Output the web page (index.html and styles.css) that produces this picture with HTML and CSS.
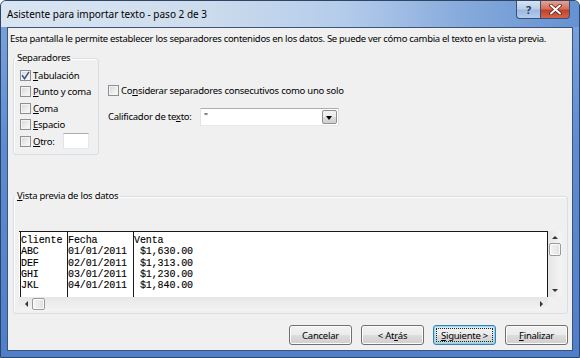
FILE: index.html
```html
<!DOCTYPE html>
<html lang="es">
<head>
    <meta charset="UTF-8">
    <title>Asistente para importar texto - paso 2 de 3</title>
    <link rel="stylesheet" href="styles.css">
</head>
<body>

    <div class="window">
        <!-- Title bar -->
        <div class="titlebar">
            <span class="title">Asistente para importar texto - paso 2 de 3</span>
            <div class="caption-buttons">
                <span class="cap-btn help">?</span>
                <span class="cap-btn close">
                    <svg width="13" height="11" viewBox="0 0 13 11">
                        <path d="M2 1.5 L11 9.5 M11 1.5 L2 9.5" stroke="#5a1a12" stroke-width="3.6" stroke-linecap="round"/>
                        <path d="M2 1.5 L11 9.5 M11 1.5 L2 9.5" stroke="#ffffff" stroke-width="2" stroke-linecap="round"/>
                    </svg>
                </span>
            </div>
        </div>

        <div class="client">
            <p class="intro">Esta pantalla le permite establecer los separadores contenidos en los datos. Se puede ver cómo cambia el texto en la vista previa.</p>

            <div class="options">
                <fieldset class="group separators">
                    <legend>Separadores</legend>
                    <label class="check-row"><span class="check checked"><svg width="9" height="9" viewBox="0 0 9 9"><path d="M1 4.2 L3.6 7.6 L8 0.8" fill="none" stroke="#3f5488" stroke-width="1.5"/></svg></span><u>T</u>abulación</label>
                    <label class="check-row"><span class="check"></span><u>P</u>unto y coma</label>
                    <label class="check-row"><span class="check"></span><u>C</u>oma</label>
                    <label class="check-row"><span class="check"></span><u>E</u>spacio</label>
                    <label class="check-row"><span class="check"></span><u>O</u>tro:<span class="textbox"></span></label>
                </fieldset>

                <div class="side">
                    <label class="check-row"><span class="check"></span>Co<u>n</u>siderar separadores consecutivos como uno solo</label>
                    <div class="qualifier">
                        <span class="qualifier-label">Calificador de te<u>x</u>to:</span>
                        <div class="combo">
                            <span class="combo-value">"</span>
                            <span class="combo-arrow"></span>
                        </div>
                    </div>
                </div>
            </div>

            <fieldset class="group preview-group">
                <legend><u>V</u>ista previa de los datos</legend>
                <div class="preview">
                    <div class="preview-main">
                        <div class="data">
                            <div class="col col-client">Cliente<br>ABC<br>DEF<br>GHI<br>JKL</div>
                            <div class="col col-date">Fecha<br>01/01/2011<br>02/01/2011<br>03/01/2011<br>04/01/2011</div>
                            <div class="col col-sale">Venta<br> $1,630.00<br> $1,313.00<br> $1,230.00<br> $1,840.00</div>
                        </div>
                        <div class="vscroll">
                            <span class="arrow up"></span>
                            <span class="thumb"></span>
                            <span class="arrow down"></span>
                        </div>
                    </div>
                    <div class="hscroll">
                        <span class="arrow left"></span>
                        <span class="thumb"></span>
                        <span class="arrow right"></span>
                    </div>
                </div>
            </fieldset>

            <div class="buttons">
                <button class="btn">Cancelar</button>
                <button class="btn">&lt; At<u>r</u>ás</button>
                <button class="btn default"><span class="focus-ring"><u>S</u>iguiente &gt;</span></button>
                <button class="btn"><u>F</u>inalizar</button>
            </div>
        </div>
    </div>

</body>
</html>
```

FILE: styles.css
```css
* {
    margin: 0;
    padding: 0;
    box-sizing: border-box;
}
body {
    width: 580px;
    height: 358px;
    overflow: hidden;
    font-family: "Noto Sans", "Open Sans", sans-serif;
    font-size: 9.5px;
    letter-spacing: -0.25px;
    color: #000;
    background: #ffffff;
}
u {
    text-decoration: underline;
    text-underline-offset: 1px;
}

/* window frame */
.window {
    width: 580px;
    height: 358px;
    display: flex;
    flex-direction: column;
    border: 1px solid #2f4565;
    border-radius: 6px 6px 0 0;
    background: linear-gradient(180deg, #7ea6dd 0%, #5d8cd2 40%, #4f7fca 100%);
    padding: 0 6px 6px;
}
.titlebar {
    height: 26px;
    margin: 0 -6px;
    padding-left: 6px;
    display: flex;
    justify-content: space-between;
    align-items: flex-start;
    border-radius: 5px 5px 0 0;
    background: linear-gradient(90deg, #dae5f2 0%, #cddced 35%, #b3cbea 60%, #86aadc 80%, #6592d2 100%);
}
.title {
    padding-top: 6px;
    font-size: 10px;
    letter-spacing: 0;
}
.caption-buttons {
    display: flex;
    margin-right: 9px;
}
.cap-btn {
    height: 18px;
    display: flex;
    align-items: center;
    justify-content: center;
    border: 1px solid #3a4f71;
    border-top: none;
}
.help {
    width: 24px;
    border-radius: 0 0 0 4px;
    border-right: none;
    background: linear-gradient(180deg, #d6e3f3 0%, #bacfe9 45%, #9db9df 55%, #b4cdee 100%);
    color: #2b3b5b;
    font-weight: bold;
    font-size: 11px;
}
.close {
    width: 30px;
    border-radius: 0 0 4px 0;
    background: linear-gradient(180deg, #e6a293 0%, #d5705c 45%, #c2412a 55%, #d4664c 100%);
}

/* client area */
.client {
    flex: 1;
    background: #f0f0f0;
    border: 1px solid #3d5478;
    padding: 0 4px 0 5px;
    display: flex;
    flex-direction: column;
}
.intro {
    margin-left: -3px;
    padding-top: 4px;
    line-height: 13px;
    letter-spacing: -0.3px;
    white-space: nowrap;
}

.group {
    border: 1px solid #d5dfe5;
    border-radius: 3px;
    box-shadow: inset 1px 1px 0 #fff;
}
.group legend {
    padding: 0 2px;
    line-height: 12px;
}

.options {
    display: flex;
    margin-top: 7px;
}
.separators {
    width: 86px;
    height: 103px;
    padding: 3px 0 0 6px;
}
.separators legend {
    margin-left: -5px;
}
.check-row {
    display: flex;
    align-items: center;
    height: 16.5px;
    white-space: nowrap;
}
.check {
    width: 11px;
    height: 11px;
    margin-right: 2px;
    display: flex;
    align-items: center;
    justify-content: center;
    border: 1px solid #8e8f8f;
    background: linear-gradient(135deg, #d3d6da 0%, #eceef0 60%, #fafafa 100%);
    box-shadow: inset 0 0 0 1px #f3f3f3;
}
.textbox {
    width: 26px;
    height: 16px;
    margin-left: 8px;
    background: #fff;
    border: 1px solid #abadb3;
    border-color: #abadb3 #e3e9ef #e3e9ef #e2e3ea;
}

.side {
    margin-left: 9px;
    padding-top: 30px;
}
.qualifier {
    display: flex;
    align-items: center;
    margin-top: 9px;
}
.qualifier-label {
    width: 92px;
}
.combo {
    width: 139px;
    height: 18px;
    display: flex;
    justify-content: space-between;
    background: #fff;
    border: 1px solid #abadb3;
    border-color: #abadb3 #dbdfe6 #e3e9ef #e2e3ea;
}
.combo-value {
    padding: 1px 0 0 3px;
    line-height: 13px;
}
.combo-arrow {
    width: 15px;
    margin: 1px;
    border: 1px solid #8f8f8f;
    border-radius: 2px;
    background: linear-gradient(180deg, #f2f2f2 0%, #ebebeb 50%, #dddddd 51%, #cfcfcf 100%);
    position: relative;
}
.combo-arrow::after {
    content: "";
    position: absolute;
    left: 3px;
    top: 5px;
    border-left: 3.5px solid transparent;
    border-right: 3.5px solid transparent;
    border-top: 4px solid #000;
}

/* preview */
.preview-group {
    margin-top: 35px;
    height: 124px;
    padding: 29px 5px 0 5px;
}
.preview-group legend {
    margin-left: -4px;
}
.preview-main {
    display: flex;
    height: 66px;
}
.data {
    flex: 1;
    display: flex;
    background: #fff;
    border-top: 1px solid #1a1a1a;
    border-right: 1px solid #1a1a1a;
    padding-left: 1px;
    font-family: "Liberation Mono", monospace;
    font-size: 10px;
    letter-spacing: -0.1px;
    line-height: 11.25px;
    -webkit-text-stroke: 0.12px #000;
    white-space: pre;
}
.col {
    border-left: 1px solid #1a1a1a;
    padding-top: 3px;
}
.col-client {
    width: 47px;
}
.col-date {
    width: 66px;
}
.col-sale {
    flex: 1;
}

.vscroll {
    width: 14px;
    display: flex;
    flex-direction: column;
    align-items: center;
    background: linear-gradient(90deg, #e6e6e6, #f4f4f4);
    padding-top: 5px;
}
.vscroll .thumb {
    width: 12px;
    height: 13px;
    margin-top: 4px;
}
.vscroll .down {
    margin-top: auto;
    margin-bottom: 5px;
}
.hscroll {
    height: 14px;
    display: flex;
    align-items: center;
    margin-right: 14px;
    padding: 0 5px 0 6px;
    background: linear-gradient(180deg, #e6e6e6, #f4f4f4);
}
.hscroll .thumb {
    width: 13px;
    height: 12px;
    margin-left: 4px;
}
.hscroll .right {
    margin-left: auto;
}
.thumb {
    border: 1px solid #9a9a9a;
    border-radius: 2px;
    background: linear-gradient(90deg, #f4f4f4, #e0e0e0);
    box-shadow: inset 0 0 0 1px #fbfbfb;
}
.arrow {
    width: 0;
    height: 0;
}
.arrow.up {
    border-left: 3px solid transparent;
    border-right: 3px solid transparent;
    border-bottom: 3px solid #333;
}
.arrow.down {
    border-left: 3px solid transparent;
    border-right: 3px solid transparent;
    border-top: 3px solid #333;
}
.arrow.left {
    border-top: 3px solid transparent;
    border-bottom: 3px solid transparent;
    border-right: 3px solid #333;
}
.arrow.right {
    border-top: 3px solid transparent;
    border-bottom: 3px solid transparent;
    border-left: 3px solid #333;
}

/* buttons */
.buttons {
    display: flex;
    justify-content: flex-end;
    gap: 9px;
    margin-top: 11px;
}
.btn {
    width: 63px;
    height: 20px;
    font-family: inherit;
    font-size: 9.5px;
    letter-spacing: -0.25px;
    color: #000;
    border: 1px solid #707070;
    border-radius: 3px;
    background: linear-gradient(180deg, #f2f2f2 0%, #ebebeb 50%, #dddddd 51%, #cfcfcf 100%);
    box-shadow: inset 0 0 0 1px #fcfcfc;
    display: flex;
    align-items: center;
    justify-content: center;
}
.btn.default {
    border-color: #3c7fb1;
    box-shadow: inset 0 0 0 1px #48d1ff55, inset 0 0 2px 1px #9ed8f7;
    padding: 2px;
}
.focus-ring {
    flex: 1;
    align-self: stretch;
    display: flex;
    align-items: center;
    justify-content: center;
    border: 1px dotted #222;
}
```
